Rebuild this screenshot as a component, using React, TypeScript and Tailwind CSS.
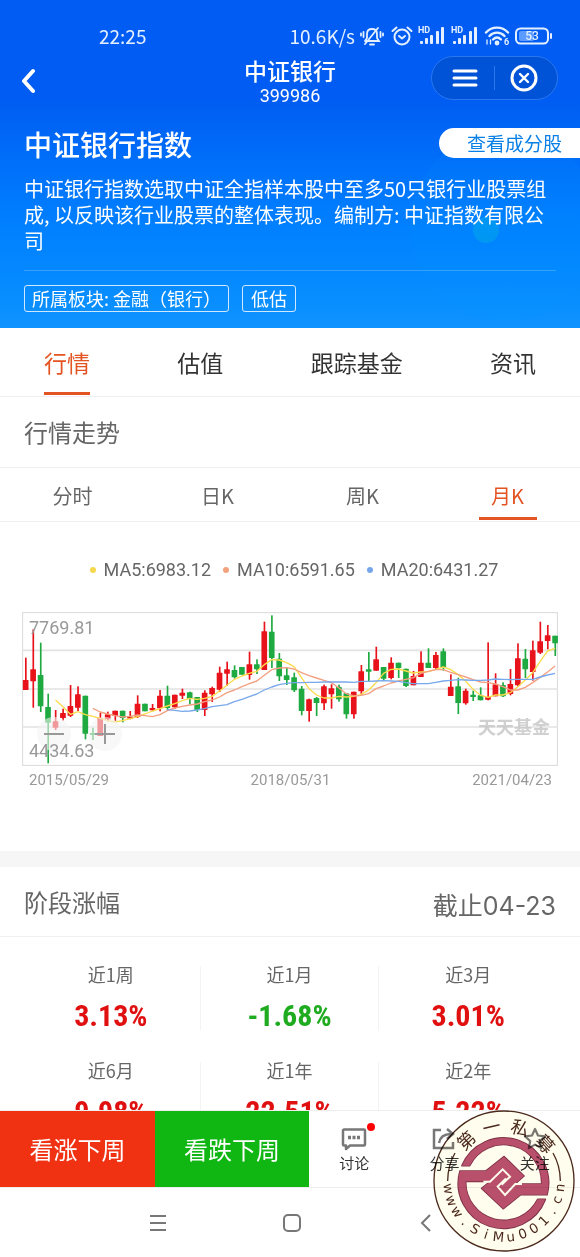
import { useState } from "react";

type Candle = [number, number, number, number, "up" | "down"];

// [high, open/close top, open/close bottom, low, direction], in chart units
const candles: Candle[] = [
  [137, 204, 234, 234, "up"], [52, 172, 208, 287, "up"], [92, 189, 283, 300, "down"], [245, 285, 332, 454, "down"],
  [294, 328, 347, 354, "up"], [290, 303, 318, 326, "up"], [219, 282, 311, 315, "up"], [223, 247, 287, 297, "up"],
  [251, 251, 365, 382, "down"], [347, 363, 369, 384, "down"], [302, 318, 372, 372, "up"], [299, 307, 322, 328, "up"],
  [296, 296, 312, 328, "up"], [296, 296, 318, 331, "down"], [297, 314, 319, 322, "up"], [250, 275, 315, 318, "up"],
  [275, 275, 298, 298, "down"], [276, 288, 295, 298, "up"], [234, 251, 289, 298, "up"], [221, 251, 288, 295, "down"],
  [248, 248, 286, 290, "up"], [230, 242, 251, 261, "up"], [239, 241, 260, 277, "down"], [255, 255, 294, 300, "down"],
  [235, 242, 294, 312, "up"], [224, 228, 247, 270, "up"], [164, 182, 233, 240, "up"], [149, 172, 185, 222, "up"],
  [160, 174, 196, 200, "down"], [165, 165, 188, 188, "down"], [119, 157, 189, 203, "up"], [142, 157, 172, 186, "down"],
  [29, 58, 174, 174, "up"], [10, 59, 138, 168, "down"], [123, 140, 193, 207, "down"], [165, 190, 204, 219, "down"],
  [182, 196, 235, 240, "down"], [222, 230, 297, 310, "down"], [260, 262, 297, 329, "up"], [255, 258, 273, 312, "down"],
  [218, 223, 274, 294, "up"], [217, 229, 247, 290, "up"], [218, 225, 262, 269, "down"], [244, 244, 307, 320, "down"],
  [239, 239, 307, 320, "up"], [159, 178, 238, 250, "up"], [120, 172, 179, 209, "down"], [104, 142, 176, 176, "up"],
  [165, 165, 200, 204, "down"], [136, 152, 198, 202, "up"], [152, 152, 168, 198, "down"], [170, 170, 222, 225, "down"],
  [177, 192, 220, 220, "up"], [118, 152, 195, 195, "up"], [109, 152, 168, 168, "down"], [120, 129, 168, 172, "up"],
  [109, 118, 168, 176, "down"], [187, 224, 252, 252, "up"], [197, 223, 273, 306, "down"], [230, 236, 274, 278, "up"],
  [236, 248, 255, 267, "down"], [226, 250, 265, 265, "down"], [91, 255, 263, 265, "up"], [184, 217, 253, 253, "up"],
  [211, 219, 253, 255, "down"], [171, 216, 246, 250, "up"], [94, 139, 220, 224, "up"], [111, 140, 172, 198, "down"],
  [86, 115, 180, 206, "up"], [29, 88, 122, 126, "up"], [39, 70, 87, 112, "up"], [71, 71, 94, 132, "down"]
];

const averages = [
  {
    name: "MA5",
    value: "6983.12",
    dot: "bg-[#f5d84c]",
    stroke: "#fbdc4e",
    start: 4,
    points: [264, 284, 307, 299, 308, 313, 319, 326, 330, 326, 320, 314, 306, 297, 290, 282, 275, 266, 259, 262, 259, 253, 237, 220, 202, 192, 184, 178, 158, 143, 144, 152, 164, 197, 230, 249, 258, 258, 253, 255, 253, 247, 234, 212, 184, 172, 171, 177, 183, 180, 179, 172, 165, 173, 188, 207, 232, 250, 256, 249, 249, 242, 224, 204, 182, 148, 117, 109]
  },
  {
    name: "MA10",
    value: "6591.65",
    dot: "bg-[#f2a27c]",
    stroke: "#f2a080",
    start: 9,
    points: [289, 300, 306, 311, 315, 313, 309, 311, 314, 308, 296, 288, 283, 279, 276, 269, 264, 255, 242, 234, 224, 215, 207, 190, 173, 168, 167, 171, 182, 191, 198, 205, 212, 228, 245, 252, 250, 245, 230, 222, 213, 207, 202, 197, 184, 178, 173, 173, 181, 188, 195, 203, 210, 212, 216, 224, 234, 234, 226, 212, 196, 180, 162]
  },
  {
    name: "MA20",
    value: "6431.27",
    dot: "bg-[#78a5ea]",
    stroke: "#78a8ec",
    start: 19,
    points: [293, 295, 298, 297, 294, 290, 284, 281, 278, 269, 262, 254, 246, 234, 225, 218, 214, 212, 212, 211, 211, 210, 210, 210, 210, 211, 208, 208, 207, 206, 207, 208, 212, 215, 215, 215, 211, 207, 205, 203, 204, 205, 205, 204, 201, 202, 203, 202, 202, 202, 195, 189, 184]
  }
];

const candleX = (index: number) => 11 + index * 22.37;

const periods = [
  { label: "近1周", value: "3.13%" },
  { label: "近1月", value: "-1.68%" },
  { label: "近3月", value: "3.01%" },
  { label: "近6月", value: "9.98%" },
  { label: "近1年", value: "22.51%" },
  { label: "近2年", value: "5.22%" }
];

function MutedBellIcon() {
  return (
    <svg viewBox="0 0 24 22" className="mr-0.5 h-[22px] w-6" fill="none" stroke="currentColor" strokeWidth="1.8" strokeLinecap="round">
      <path d="M6 16h13l-2-3V9c0-3-2-5-5-5S7 6 7 9v4l-2 3" />
      <path d="M10 19.500h4M5 19 18 3M3.500 7v5M1 8.500v2M20.500 7v5M23 8.500v2" />
    </svg>
  );
}

function AlarmIcon() {
  return (
    <svg viewBox="0 0 22 22" className="size-[22px]" fill="none" stroke="currentColor" strokeWidth="2" strokeLinecap="round" strokeLinejoin="round">
      <circle cx="11" cy="12" r="7.500" />
      <path d="m8 11 3 2.500 3-2.500M1.500 6 5.500 2.500M20.500 6l-4-3.500" />
    </svg>
  );
}

function SignalIcon() {
  return (
    <svg viewBox="0 0 28 20" className="h-5 w-7" fill="currentColor">
      <text x="0" y="7" fontSize="9" fontWeight="700" fontFamily="Roboto, sans-serif">HD</text>
      <rect x="2" y="15" width="3" height="3" rx="1" />
      <rect x="7" y="12" width="3" height="6" rx="1" />
      <rect x="12" y="9" width="3" height="9" rx="1" />
      <rect x="18" y="5" width="3" height="13" rx="1" />
      <rect x="23" y="1" width="3" height="17" rx="1" />
    </svg>
  );
}

function WifiIcon() {
  return (
    <svg viewBox="0 0 26 20" className="h-5 w-[26px]" fill="none" stroke="currentColor" strokeWidth="2.400" strokeLinecap="round">
      <path d="M2 6.500C8 0 18 0 24 6.500M5.500 10c4-4.500 11-4.500 15 0M9 13.500c2.500-2.500 5.500-2.500 8 0" />
      <circle cx="13" cy="17" r="1.200" fill="currentColor" />
      <path d="M3 14v4M6.500 14v4" strokeWidth="1.300" />
      <text x="20" y="19" fontSize="9" fontWeight="700" fontFamily="Roboto, sans-serif" fill="currentColor" stroke="none">6</text>
    </svg>
  );
}

function BatteryIcon() {
  return (
    <svg viewBox="0 0 38 18" className="h-[18px] w-[38px]" fill="none">
      <rect x="4" y="4" width="15" height="10" rx="2" fill="#5c9bff" />
      <rect x="1" y="1.500" width="32" height="15" rx="4.500" stroke="currentColor" strokeWidth="2" />
      <path d="M36 7v4" stroke="currentColor" strokeWidth="2" strokeLinecap="round" />
      <text x="17" y="13" textAnchor="middle" fontSize="12" fontWeight="500" fontFamily="Roboto, sans-serif" fill="currentColor">53</text>
    </svg>
  );
}

function Header() {
  return (
    <header className="relative bg-linear-to-b from-[#005cf2] from-30% via-[#007dff] via-65% to-[#0e93ff] text-white">
      <svg className="absolute right-0 bottom-0 h-[220px] w-[180px]" viewBox="0 0 180 220" fill="none">
        <circle cx="105" cy="118" r="95" fill="#00a0ff" opacity="0.1" />
        <circle cx="86" cy="122" r="13" fill="#00b4e0" opacity="0.4" />
      </svg>
      <div className="relative">
        <div className="flex h-14 items-center justify-between pt-4 pr-[27px] pl-[99px] text-[19px] text-[#e4f0ff]">
          <span>22:25</span>
          <div className="flex items-center gap-[5px]">
            <span>10.6K/s</span>
            <MutedBellIcon />
            <AlarmIcon />
            <SignalIcon />
            <SignalIcon />
            <WifiIcon />
            <BatteryIcon />
          </div>
        </div>
        <div className="grid grid-cols-[1fr_auto_1fr] items-start px-[22px]">
          <button aria-label="返回" className="flex h-[50px] w-8 items-center">
            <svg viewBox="0 0 14 26" className="h-[26px] w-3.5" fill="none" stroke="currentColor" strokeWidth="4" strokeLinecap="round" strokeLinejoin="round">
              <path d="M11 3 2 13l9 10" />
            </svg>
          </button>
          <div className="text-center">
            <h1 className="text-[23px] leading-7 font-medium">中证银行</h1>
            <p className="font-[Roboto] text-lg leading-6">399986</p>
          </div>
          <div className="flex h-11 w-[127px] items-center justify-self-end rounded-full border border-[#2b78ee] bg-[#0053d6] px-1">
            <button aria-label="菜单" className="flex flex-1 justify-center">
              <svg viewBox="0 0 26 20" className="h-5 w-[26px]" stroke="currentColor" strokeWidth="3" strokeLinecap="round">
                <path d="M2 3h22M2 10h22M2 17h22" />
              </svg>
            </button>
            <span className="h-6 w-px bg-[#2b78ee]" />
            <button aria-label="关闭" className="flex flex-1 justify-center">
              <svg viewBox="0 0 28 28" className="size-7" fill="none" stroke="currentColor" strokeLinecap="round">
                <circle cx="14" cy="14" r="12" strokeWidth="3" />
                <path d="m10 10 8 8M18 10l-8 8" strokeWidth="2.400" />
              </svg>
            </button>
          </div>
        </div>
        <div className="mt-5 flex h-8 items-start justify-between pl-6">
          <h2 className="text-[28px] leading-8 font-medium">中证银行指数</h2>
          <button className="h-[30px] rounded-l-full bg-white pr-[18px] pl-7 text-[19px] leading-[30px] text-[#0a80e6]">查看成分股</button>
        </div>
        <div className="px-6 pt-4 pb-4">
          <p className="text-xl leading-[26px]">
            中证银行指数选取中证全指样本股中至多50只银行业股票组成, 以反映该行业股票的整体表现。编制方: 中证指数有限公司
          </p>
          <div className="mt-4 flex gap-[13px] border-t border-white/20 pt-3.5 text-lg leading-[25px]">
            <span className="rounded-[3px] border border-white/80 px-[7px]">所属板块: 金融（银行）</span>
            <span className="rounded-[3px] border border-white/80 px-2">低估</span>
          </div>
        </div>
      </div>
    </header>
  );
}

function PriceChart() {
  return (
    <div className="relative">
      <svg viewBox="0 0 1608 462" className="block w-full">
        <rect x="1" y="1" width="1606" height="460" fill="none" stroke="#dedede" strokeWidth="5" />
        <path d="M0 115h1608M0 231h1608M0 345h1608" stroke="#e2e2e2" strokeWidth="5" />
        {candles.map(([high, top, bottom, low, direction], index) => (
          <g key={index} fill={direction === "up" ? "#e8121a" : "#1faa41"}>
            <rect x={candleX(index) - 2} y={high} width="5" height={low - high} />
            <rect x={candleX(index) - 8.500} y={top} width="17" height={Math.max(bottom - top, 6)} rx="1" />
          </g>
        ))}
        {averages.map((line) => (
          <polyline
            key={line.name}
            points={line.points.map((y, i) => `${candleX(line.start + i)},${y}`).join(" ")}
            fill="none"
            stroke={line.stroke}
            strokeWidth="4"
            strokeLinejoin="round"
          />
        ))}
      </svg>
      <span className="absolute top-1.5 left-[7px] font-[Roboto] text-lg leading-5 text-[#999]">7769.81</span>
      <span className="absolute right-2 bottom-7 text-lg leading-6 font-bold text-[#c4c4c4]/80">天天基金</span>
      <button aria-label="缩小" className="absolute bottom-[15px] left-[15px] flex size-[34px] items-center justify-center rounded-full bg-[#f3f3f3]/60">
        <span className="h-0.5 w-5 bg-[#999]" />
      </button>
      <button aria-label="放大" className="absolute bottom-[15px] left-[66px] flex size-[34px] items-center justify-center rounded-full bg-[#f3f3f3]/60">
        <svg viewBox="0 0 20 20" className="size-5" stroke="#999" strokeWidth="2">
          <path d="M0 10h20M10 0v20" />
        </svg>
      </button>
      <span className="absolute bottom-[5px] left-[7px] font-[Roboto] text-lg leading-5 text-[#999]">4434.63</span>
    </div>
  );
}

function SiteStamp() {
  // glyphs sit around the ring, each turned to face outwards
  const url = "www.SiMu001.cn".split("");
  const title: [string, number][] = [["第", -43], ["一", -13], ["私", 17], ["募", 48]];
  const upperHook = "M-126-46A135 135 0 0 1 129 41H50L-2 83-67 22-38-1 0-40 33 9H113A114 114 0 0 0-103-46Z";
  const lowerHook = "M-132-30H-54L0-73 60-15 33 9 0 40-38 1H-115A114 114 0 0 0 101 55H124A135 135 0 0 1-132-30Z";
  return (
    <svg viewBox="-216 -216 432 432" className="pointer-events-none absolute right-1 bottom-1 size-36 mix-blend-multiply">
      <circle r="210" fill="#fffdee" stroke="#4b2a1d" strokeWidth="4" />
      <path d="M-169 0A169 169 0 0 1-147-84M169 0A169 169 0 0 0 147-84" fill="none" stroke="#4b2a1d" strokeWidth="4" />
      <g stroke="#7d3046" strokeWidth="5" strokeLinejoin="round">
        <path d={upperHook} />
        <path d={lowerHook} />
      </g>
      <g fill="#b8506c">
        <path d={upperHook} />
        <path d={lowerHook} />
      </g>
      <g fill="none" stroke="#fffdee" strokeWidth="6">
        <path d="M-62 2H-42L-4-35 18-13-7 11M54 9H34L3 42-19 17 6-8" />
      </g>
      <g fill="#4b2a1d" textAnchor="middle">
        {title.map(([char, angle]) => (
          <text key={char} transform={`rotate(${angle})`} y="-146" fontSize="54" fontFamily="'Noto Sans CJK SC', sans-serif">
            {char}
          </text>
        ))}
        {url.map((char, index) => (
          <text key={index} transform={`rotate(${82 - index * 12.7})`} y="182" fontSize="40" fontFamily="'DejaVu Sans', sans-serif">
            {char}
          </text>
        ))}
      </g>
    </svg>
  );
}

function Tabs({ items, active, onSelect }: { items: string[]; active: string; onSelect: (item: string) => void }) {
  return (
    <nav className="flex h-[69px] justify-between border-b border-[#f0f0f0] px-11 text-[23px]">
      {items.map((item) => (
        <button
          key={item}
          onClick={() => onSelect(item)}
          className={item === active ? "mb-px border-b-3 border-[#e35422] pt-1 text-[#e35422]" : "mb-px border-b-3 border-transparent pt-1 text-[#333]"}
        >
          {item}
        </button>
      ))}
    </nav>
  );
}

export default function App() {
  const [tab, setTab] = useState("行情");
  const [range, setRange] = useState("月K");

  return (
    <div className="relative flex h-screen flex-col overflow-hidden bg-white font-['Noto_Sans_CJK_SC',sans-serif] text-[#666]">
      <main className="min-h-0 flex-1 overflow-hidden">
        <Header />
        <Tabs items={["行情", "估值", "跟踪基金", "资讯"]} active={tab} onSelect={setTab} />
        <section>
          <h3 className="flex h-[71px] items-center border-b border-[#f0f0f0] px-6 text-2xl">行情走势</h3>
          <div className="grid h-[54px] grid-cols-4 justify-items-center border-b border-[#f0f0f0] text-xl">
            {["分时", "日K", "周K", "月K"].map((item) => (
              <button
                key={item}
                onClick={() => setRange(item)}
                className={item === range ? "mb-px w-[58px] border-b-3 border-[#e35422] pt-1.5 text-[#e35422]" : "mb-px w-[58px] border-b-3 border-transparent pt-1.5"}
              >
                {item}
              </button>
            ))}
          </div>
          <div className="px-[22px] pt-[38px] pb-[61px]">
            <ul className="flex justify-center gap-3 pl-2 font-[Roboto] text-lg leading-5">
              {averages.map((line) => (
                <li key={line.name} className="flex items-center gap-2">
                  <span className={`size-1.5 rounded-full ${line.dot}`} />
                  {line.name}:{line.value}
                </li>
              ))}
            </ul>
            <div className="mt-8">
              <PriceChart />
            </div>
            <div className="mt-1 flex justify-between pr-1.5 pl-[7px] font-[Roboto] text-[15px] leading-5 text-[#999]">
              <span>2015/05/29</span>
              <span>2018/05/31</span>
              <span>2021/04/23</span>
            </div>
          </div>
        </section>
        <section className="border-t-16 border-[#f6f6f6]">
          <div className="flex h-[70px] items-center justify-between border-b border-[#f0f0f0] px-6">
            <h3 className="text-2xl">阶段涨幅</h3>
            <span className="pt-2.5 font-[Inter,'Noto_Sans_CJK_SC'] text-[25px]">截止04-23</span>
          </div>
          <dl className="grid grid-cols-3 gap-y-8 px-[22px] pt-[29px] text-center">
            {periods.map((period) => (
              <div key={period.label} className="border-r border-[#f3f3f3] nth-[3n]:border-transparent">
                <dt className="text-lg leading-4">{period.label}</dt>
                <dd
                  className={`mt-5 font-['Liberation_Sans_Narrow','Roboto_Condensed',Roboto] text-3xl leading-7 font-bold ${
                    period.value.startsWith("-") ? "text-[#1fab1f]" : "text-[#e01010]"
                  }`}
                >
                  {period.value}
                </dd>
              </div>
            ))}
          </dl>
        </section>
      </main>

      <footer className="bg-white">
        <div className="flex h-[78px] border-y border-[#eee] text-[#333]">
          <button className="w-[155px] bg-[#f03213] text-2xl text-white">看涨下周</button>
          <button className="w-[154px] bg-[#10b612] text-2xl text-white">看跌下周</button>
          <div className="grid flex-1 grid-cols-3 text-[15px] leading-5">
            <button className="flex flex-col items-center gap-0.5 pt-4">
              <span className="relative">
                <svg viewBox="0 0 26 24" className="h-6 w-[26px]" fill="none" stroke="#777" strokeWidth="2.500" strokeLinejoin="round">
                  <path d="M3 2.500h20a1 1 0 0 1 1 1v14a1 1 0 0 1-1 1H9l-4 3.500v-3.500H3a1 1 0 0 1-1-1v-14a1 1 0 0 1 1-1Z" />
                  <path d="M7 10.500h3M11.500 10.500h3M16 10.500h3" strokeWidth="3.500" />
                </svg>
                <span className="absolute -top-1 -right-2 size-2 rounded-full bg-[#f00]" />
              </span>
              讨论
            </button>
            <button className="flex flex-col items-center gap-0.5 pt-4">
              <svg viewBox="0 0 24 24" className="size-6" fill="none" stroke="#777" strokeWidth="2.500">
                <path d="M9 3H2v18h19v-6M7 16c1-6 5-9 12-9M15 2l6 5-6 5" />
              </svg>
              分享
            </button>
            <button className="flex flex-col items-center gap-0.5 pt-4">
              <svg viewBox="0 0 24 24" className="size-6" fill="none" stroke="#777" strokeWidth="2.200" strokeLinejoin="round">
                <path d="m12 2 3 6.500 7 .8-5.200 4.800 1.400 7L12 17.600 5.800 21.100l1.400-7L2 9.300l7-.8Z" />
              </svg>
              关注
            </button>
          </div>
        </div>
        <div className="grid h-[69px] grid-cols-3 items-center justify-items-center pr-[87px] pl-[91px] text-[#777]">
          <button aria-label="最近任务">
            <svg viewBox="0 0 18 18" className="size-[18px]" stroke="currentColor" strokeWidth="2">
              <path d="M1 2h16M1 9h16M1 16h16" />
            </svg>
          </button>
          <button aria-label="主屏幕">
            <svg viewBox="0 0 18 18" className="size-[18px]" fill="none" stroke="currentColor" strokeWidth="2">
              <rect x="1" y="1" width="16" height="16" rx="4" />
            </svg>
          </button>
          <button aria-label="返回上一页">
            <svg viewBox="0 0 18 18" className="size-[18px]" fill="none" stroke="currentColor" strokeWidth="2">
              <path d="M13 1 5 9l8 8" />
            </svg>
          </button>
        </div>
      </footer>
      <SiteStamp />
    </div>
  );
}
